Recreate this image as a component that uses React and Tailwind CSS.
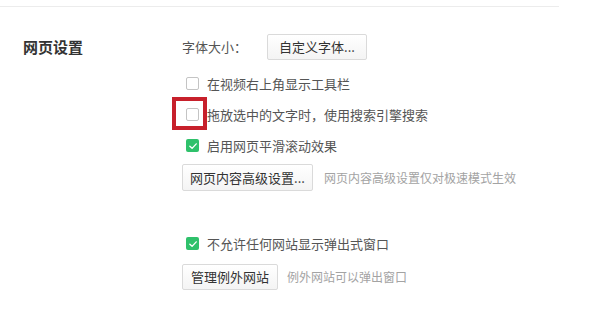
import React from 'react';

const font = { fontFamily: '"Microsoft YaHei", "Noto Sans CJK SC", "Noto Sans", sans-serif' };

function Check({ checked }) {
  if (checked) {
    return (
      <span className="flex h-[13px] w-[13px] shrink-0 items-center justify-center rounded-[2px] bg-[#2fc16b]">
        <svg viewBox="0 0 12 12" className="h-[10px] w-[10px]">
          <path d="M2.2 6.2 L4.9 8.8 L9.9 3.4" fill="none" stroke="#fff" strokeWidth="1.6" strokeLinecap="round" strokeLinejoin="round" />
        </svg>
      </span>
    );
  }
  return <span className="block h-[13px] w-[13px] shrink-0 rounded-[2px] border border-[#c4c4c4] bg-white" />;
}

function Option({ checked, children, marked }) {
  return (
    <div className="flex h-[31px] items-center pl-[4px]">
      <span className="relative">
        <Check checked={checked} />
        {marked && (
          <span className="absolute left-[-14px] top-[-11px] h-[33px] w-[35px] border-[4px] border-[#c7202b]" />
        )}
      </span>
      <span className="ml-[8px] text-[13px] text-[#555]">{children}</span>
    </div>
  );
}

function Btn({ children, className }) {
  return (
    <button className={`rounded-[2px] border border-[#dadada] bg-gradient-to-b from-white to-[#f4f4f4] text-[13px] text-[#333] ${className}`}>
      {children}
    </button>
  );
}

export default function App() {
  return (
    <div className="h-[331px] w-[590px] overflow-hidden bg-white" style={font}>
      <div className="h-[6px]" />
      <div className="h-px w-[559px] bg-[#ececec]" />
      <div className="flex">
        <div className="w-[182px] shrink-0 pl-[23px] pt-[29px]">
          <div className="text-[15px] font-bold text-[#333]">网页设置</div>
        </div>
        <div className="flex flex-col">
          <div className="mt-[27px] flex h-[26px] items-center">
            <span className="text-[13px] text-[#555]">字体大小：</span>
            <Btn className="ml-[20px] h-[26px] w-[100px]">自定义字体...</Btn>
          </div>
          <div className="mt-[8px]">
            <Option>在视频右上角显示工具栏</Option>
            <Option marked>拖放选中的文字时，使用搜索引擎搜索</Option>
            <Option checked>启用网页平滑滚动效果</Option>
          </div>
          <div className="mt-[3px] flex h-[27px] items-center">
            <Btn className="h-[27px] w-[131px]">网页内容高级设置...</Btn>
            <span className="ml-[11px] text-[12px] text-[#a3a3a3]">网页内容高级设置仅对极速模式生效</span>
          </div>
          <div className="mt-[37px]">
            <Option checked>不允许任何网站显示弹出式窗口</Option>
          </div>
          <div className="mt-[5px] flex h-[26px] items-center">
            <Btn className="h-[26px] w-[96px]">管理例外网站</Btn>
            <span className="ml-[9px] text-[12px] text-[#a3a3a3]">例外网站可以弹出窗口</span>
          </div>
        </div>
      </div>
    </div>
  );
}
